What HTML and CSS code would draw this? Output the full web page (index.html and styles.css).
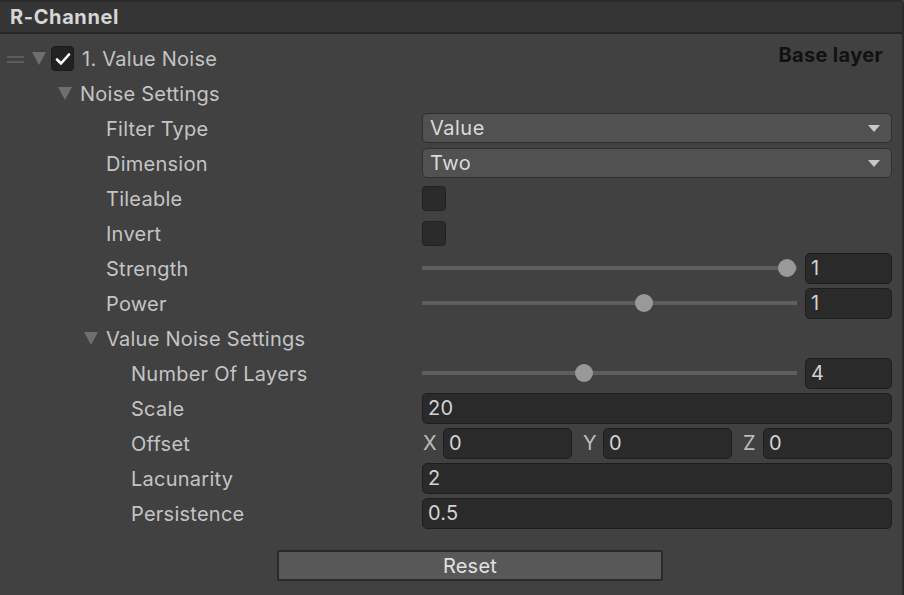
FILE: index.html
```html
<!DOCTYPE html>
<html>
<head>
<meta charset="utf-8">
<link rel="stylesheet" href="styles.css">
</head>
<body>
<div class="panel">
  <div class="header">R-Channel</div>
  <div class="content">
    <div class="row layer-row">
      <span class="handle"></span>
      <span class="fold"></span>
      <span class="layer-check">
        <svg width="16" height="14" viewBox="0 0 16 14"><path d="M2 7.5 L6 11.5 L14 2.5" fill="none" stroke="#ffffff" stroke-width="2.6" stroke-linecap="round" stroke-linejoin="round"/></svg>
      </span>
      <span class="label layer-name">1. Value Noise</span>
      <span class="base">Base layer</span>
    </div>
    <div class="row group lvl1"><span class="fold"></span><span class="label">Noise Settings</span></div>

    <div class="row prop lvl2"><span class="label">Filter Type</span>
      <div class="ctrl"><div class="dropdown"><span>Value</span><span class="arrow"></span></div></div></div>
    <div class="row prop lvl2"><span class="label">Dimension</span>
      <div class="ctrl"><div class="dropdown"><span>Two</span><span class="arrow"></span></div></div></div>
    <div class="row prop lvl2"><span class="label">Tileable</span>
      <div class="ctrl"><div class="checkbox"></div></div></div>
    <div class="row prop lvl2"><span class="label">Invert</span>
      <div class="ctrl"><div class="checkbox"></div></div></div>
    <div class="row prop lvl2"><span class="label">Strength</span>
      <div class="ctrl slider-ctrl"><div class="slider"><div class="track"></div><div class="thumb" style="left: 97.3%"></div></div><div class="field num">1</div></div></div>
    <div class="row prop lvl2"><span class="label">Power</span>
      <div class="ctrl slider-ctrl"><div class="slider"><div class="track"></div><div class="thumb" style="left: 59.2%"></div></div><div class="field num">1</div></div></div>

    <div class="row group lvl2g"><span class="fold"></span><span class="label">Value Noise Settings</span></div>

    <div class="row prop lvl3"><span class="label">Number Of Layers</span>
      <div class="ctrl slider-ctrl"><div class="slider"><div class="track"></div><div class="thumb" style="left: 43.2%"></div></div><div class="field num">4</div></div></div>
    <div class="row prop lvl3"><span class="label">Scale</span>
      <div class="ctrl"><div class="field wide">20</div></div></div>
    <div class="row prop lvl3"><span class="label">Offset</span>
      <div class="ctrl vec">
        <div class="comp"><span class="axis">X</span><div class="field">0</div></div>
        <div class="comp"><span class="axis">Y</span><div class="field">0</div></div>
        <div class="comp"><span class="axis">Z</span><div class="field">0</div></div>
      </div></div>
    <div class="row prop lvl3"><span class="label">Lacunarity</span>
      <div class="ctrl"><div class="field wide">2</div></div></div>
    <div class="row prop lvl3"><span class="label">Persistence</span>
      <div class="ctrl"><div class="field wide">0.5</div></div></div>

    <div class="btn-row"><button class="reset">Reset</button></div>
  </div>
</div>
</body>
</html>
```

FILE: styles.css
```css
html, body {
  margin: 0;
  padding: 0;
  background: #414141;
  width: 904px;
  height: 595px;
  overflow: hidden;
}
body {
  font-family: Inter, "Noto Sans", "Liberation Sans", sans-serif;
  font-size: 20px;
  letter-spacing: 0.25px;
  color: #c4c4c4;
}
.panel {
  width: 904px;
  height: 595px;
  box-sizing: border-box;
  border-top: 2px solid #2a2a2a;
  border-right: 2px solid #2b2b2b;
  border-top-right-radius: 5px;
  display: flex;
  flex-direction: column;
}
.header {
  height: 30px;
  background: #353535;
  border-bottom: 2px solid #262626;
  border-top-right-radius: 4px;
  padding-left: 10px;
  font-weight: 700;
  font-size: 20px;
  color: #d6d6d6;
  display: flex;
  align-items: center;
  letter-spacing: 0.6px;
}
.content {
  padding-top: 7px;
  display: flex;
  flex-direction: column;
}
.row {
  height: 35px;
  display: flex;
  align-items: center;
}
.label {
  white-space: nowrap;
}
.fold {
  width: 0;
  height: 0;
  border-left: 7px solid transparent;
  border-right: 7px solid transparent;
  border-top: 13px solid #6f6f6f;
  margin-right: 8px;
}
.layer-row {
  padding-left: 7px;
}
.handle {
  width: 17px;
  height: 7px;
  border-top: 2px solid #5c5c5c;
  border-bottom: 2px solid #5c5c5c;
  box-sizing: border-box;
  margin-right: 8px;
  margin-top: 2px;
}
.layer-row .fold {
  margin-right: 5px;
}
.layer-check {
  width: 23px;
  height: 25px;
  box-sizing: border-box;
  background: #222222;
  border: 1px solid #1b1b1b;
  border-radius: 4px;
  display: flex;
  align-items: center;
  justify-content: center;
  margin-right: 8px;
}
.layer-name {
  color: #c4c4c4;
}
.base {
  margin-left: auto;
  margin-right: 19px;
  font-weight: 700;
  color: #111111;
  margin-top: -7px;
  letter-spacing: 0.35px;
}
.lvl1 {
  padding-left: 58px;
}
.lvl2g {
  padding-left: 84px;
}
.prop .label {
  width: 422px;
  flex: none;
  box-sizing: border-box;
}
.lvl2 .label {
  padding-left: 106px;
}
.lvl3 .label {
  padding-left: 131px;
}
.ctrl {
  width: 470px;
  flex: none;
  display: flex;
  align-items: center;
  margin-top: -1px;
}
.dropdown {
  flex: 1;
  height: 30px;
  box-sizing: border-box;
  background: #515151;
  border: 1px solid #2f2f2f;
  border-radius: 5px;
  display: flex;
  align-items: center;
  padding-left: 7px;
  padding-right: 11px;
  color: #dadada;
  letter-spacing: 0.5px;
}
.arrow {
  margin-left: auto;
  width: 0;
  height: 0;
  border-left: 6px solid transparent;
  border-right: 6px solid transparent;
  border-top: 7px solid #c8c8c8;
}
.checkbox {
  width: 24px;
  height: 25px;
  box-sizing: border-box;
  background: #2b2b2b;
  border: 1px solid #212121;
  border-radius: 4px;
}
.slider-ctrl {
  gap: 8px;
}
.slider {
  position: relative;
  flex: 1;
  height: 30px;
}
.track {
  position: absolute;
  left: 0;
  right: 0;
  top: 13px;
  height: 4px;
  background: #5e5e5e;
}
.thumb {
  position: absolute;
  top: 6px;
  width: 18px;
  height: 18px;
  margin-left: -9px;
  border-radius: 50%;
  background: #999999;
}
.field {
  height: 31px;
  box-sizing: border-box;
  background: #2a2a2a;
  border: 1px solid #1e1e1e;
  border-radius: 5px;
  display: flex;
  align-items: center;
  padding-left: 5px;
  color: #d2d2d2;
}
.num {
  width: 87px;
  flex: none;
}
.wide {
  flex: 1;
}
.vec {
  gap: 10px;
}
.comp {
  flex: 1;
  display: flex;
  align-items: center;
}
.comp .axis {
  width: 20px;
  padding-left: 1px;
  color: #bdbdbd;
}
.comp .field {
  flex: 1;
}
.btn-row {
  display: flex;
  padding-left: 277px;
  margin-top: 19px;
}
.reset {
  width: 386px;
  height: 31px;
  box-sizing: border-box;
  background: #585858;
  border: 2px solid #2a2a2a;
  border-radius: 2px;
  font-family: Inter, "Noto Sans", "Liberation Sans", sans-serif;
  font-size: 20px;
  letter-spacing: 0.25px;
  color: #e2e2e2;
  padding: 0;
}
```
